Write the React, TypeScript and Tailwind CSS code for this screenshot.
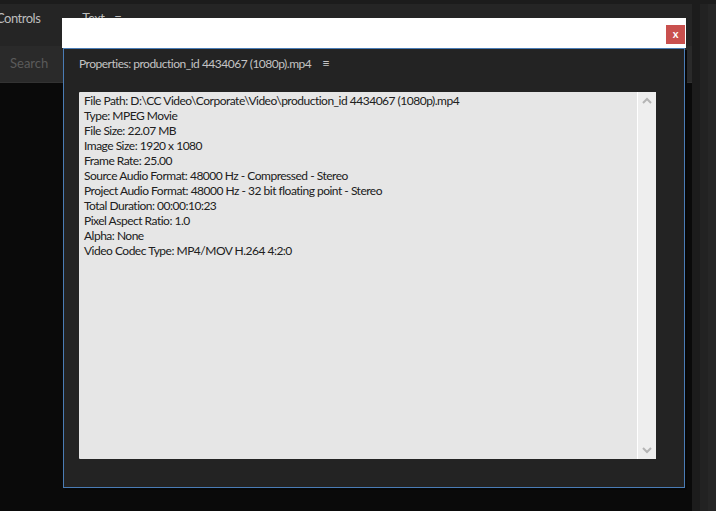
import React from "react";

const lines = [
  "File Path: D:\\CC Video\\Corporate\\Video\\production_id 4434067 (1080p).mp4",
  "Type: MPEG Movie",
  "File Size: 22.07 MB",
  "Image Size: 1920 x 1080",
  "Frame Rate: 25.00",
  "Source Audio Format: 48000 Hz - Compressed - Stereo",
  "Project Audio Format: 48000 Hz - 32 bit floating point - Stereo",
  "Total Duration: 00:00:10:23",
  "Pixel Aspect Ratio: 1.0",
  "Alpha: None",
  "Video Codec Type: MP4/MOV H.264 4:2:0",
];

export default function App() {
  return (
    <div
      className="relative w-[716px] h-[511px] overflow-hidden bg-[#0a0a0a] flex"
      style={{ fontFamily: "Lato, 'Noto Sans', sans-serif" }}
    >
      {/* background app */}
      <div className="flex-1 flex flex-col">
        <div className="h-[4px] bg-[#1c1c1c]" />
        <div className="h-[42px] bg-[#252525] flex items-start pt-[5px] text-[13px] tracking-[-0.5px] text-[#bdbdbd]">
          <span className="ml-[-4px]">Controls</span>
          <span className="ml-[42px]">Text</span>
          <span className="ml-[10px] tracking-normal">≡</span>
        </div>
        <div className="h-[37px] bg-[#2a2a2a] border-b border-[#333] flex items-center text-[13px] text-[#5a5a5a]">
          <span className="ml-[10px]">Search</span>
        </div>
        <div className="flex-1 bg-[#0a0a0a]" />
      </div>
      <div className="w-[24px] flex flex-col">
        <div className="h-[4px] bg-[#1c1c1c]" />
        <div className="flex-1 flex">
          <div className="w-[8px] bg-[#1c1c1c]" />
          <div className="w-[8px] bg-[#222222]" />
          <div className="flex-1 bg-[#262626]" />
        </div>
      </div>

      {/* modal window */}
      <div className="absolute left-[62px] top-[18px] w-[624px] h-[471px] flex flex-col">
        <div className="h-[30px] bg-white flex justify-end items-start pt-[7px] pr-[1px]">
          <div className="w-[19px] h-[19px] bg-[#c9504e] text-white text-[11px] font-bold flex items-center justify-center leading-none pb-[2px]">
            x
          </div>
        </div>
        <div className="flex-1 flex pl-[1px] pr-[1px] pb-[1px]">
          <div className="flex-1 border border-[#4a7cb5] bg-[#232323] flex flex-col pl-[15px] pr-[28px] pb-[28px] shadow-[2px_2px_0_0_#070707]">
            <div className="h-[28px] flex items-center text-[12px] tracking-[-0.5px] text-[#c4c4c4] pt-[1px]">
              <span>Properties: production_id 4434067 (1080p).mp4</span>
              <span className="ml-[11px] text-[13px] tracking-normal">≡</span>
            </div>
            <div className="mt-[15px] flex-1 bg-[#e6e6e6] flex rounded-[1px]">
              <div className="flex-1 pl-[5px] pt-[1px] text-[12px] tracking-[-0.5px] leading-[15px] text-[#202020]">
                {lines.map((l) => (
                  <div key={l}>{l}</div>
                ))}
              </div>
              <div className="w-[19px] bg-[#eeeeee] border-l border-white flex flex-col items-center justify-between py-[5px]">
                <svg width="10" height="7" viewBox="0 0 10 7">
                  <path d="M1 6 L5 2 L9 6" stroke="#b5b5b5" strokeWidth="2" fill="none" />
                </svg>
                <svg width="10" height="7" viewBox="0 0 10 7">
                  <path d="M1 1 L5 5 L9 1" stroke="#b5b5b5" strokeWidth="2" fill="none" />
                </svg>
              </div>
            </div>
          </div>
        </div>
      </div>
    </div>
  );
}
